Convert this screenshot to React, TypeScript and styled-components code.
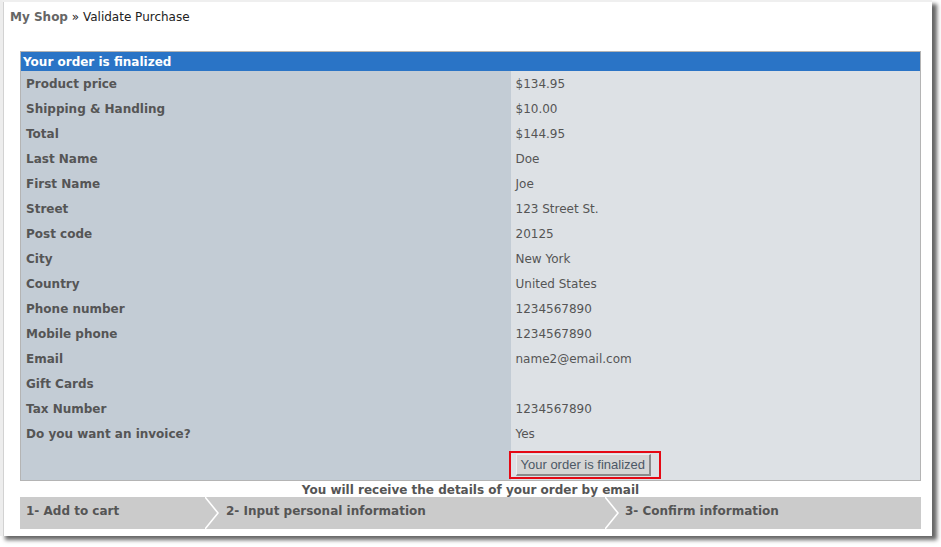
import React from "react";
import styled, { createGlobalStyle } from "styled-components";

const Global = createGlobalStyle`
  html, body { margin: 0; padding: 0; background: #ffffff; }
  body { font-family: "DejaVu Sans", Verdana, sans-serif; font-size: 12px; }
`;

const Page = styled.div`
  width: 941px;
  height: 547px;
  background: #ffffff;
  overflow: hidden;
`;

const Frame = styled.div`
  box-sizing: border-box;
  width: 932px;
  height: 536px;
  background: #ffffff;
  border-top: 2px solid #efefef;
  border-left: 3px solid #ededed;
  box-shadow: inset 1px 0 0 #d2d2d2, 5px 4px 4px rgba(0, 0, 0, 0.6);
  padding: 7px 0 0 7px;
  display: flex;
  flex-direction: column;
`;

const Crumbs = styled.div`
  line-height: 16px;
  color: #222;
  height: 16px;
`;

const CrumbHome = styled.span`
  font-weight: bold;
  color: #666;
`;

const Content = styled.div`
  margin: 26px 0 0 10px;
  width: 901px;
  display: flex;
  flex-direction: column;
`;

const Table = styled.table`
  width: 901px;
  border-collapse: collapse;
  border: 1px solid #b4b4b4;
  color: #555;
`;

const HeadCell = styled.th`
  background: #2a74c6;
  color: #fff;
  font-weight: bold;
  text-align: left;
  height: 19px;
  padding: 1px 0 0 2px;
  line-height: 18px;
  box-sizing: border-box;
`;

const Label = styled.td`
  background: #c3ccd5;
  width: 490px;
  font-weight: bold;
  height: 25px;
  padding: 1px 0 0 5px;
  line-height: 24px;
  white-space: nowrap;
  box-sizing: border-box;
`;

const Value = styled.td`
  background: #dde1e5;
  height: 25px;
  padding: 1px 0 0 5px;
  line-height: 24px;
  box-sizing: border-box;
`;

const ButtonValue = styled(Value)`
  height: 34px;
  padding: 0;
  vertical-align: top;
`;

const Highlight = styled.span`
  display: inline-flex;
  margin-top: 5px;
  margin-left: -2px;
  border: 2px solid #e50914;
  padding: 1px 8px 1px 5px;
`;

const Btn = styled.button`
  font-family: "Liberation Sans", Arial, sans-serif;
  font-size: 13px;
  color: #4c5866;
  background: #d5d5d5;
  border-style: solid;
  border-width: 1px 2px 2px 1px;
  border-color: #eeeeee #8a8a8a #8a8a8a #eeeeee;
  height: 22px;
  padding: 0 4px 0 4px;
  margin: 0;
  line-height: 19px;
`;

const Notice = styled.div`
  text-align: center;
  font-weight: bold;
  color: #555;
  line-height: 14px;
  height: 14px;
  padding-top: 2px;
`;

const Steps = styled.div`
  display: flex;
  height: 32px;
  background: #cbcbcb;
  color: #555;
  font-weight: bold;
`;

const Step = styled.div<{ $w?: number }>`
  display: flex;
  align-items: stretch;
  width: ${(p) => (p.$w ? `${p.$w}px` : "auto")};
  flex: ${(p) => (p.$w ? "none" : "1")};
`;

const StepText = styled.span<{ $pad: number }>`
  padding-left: ${(p) => p.$pad}px;
  line-height: 28px;
`;

const Chevron = () => (
  <svg width="14" height="32" viewBox="0 0 14 32" style={{ display: "block", flex: "none" }}>
    <polyline points="0,0 13,16 0,32" fill="none" stroke="#ffffff" strokeWidth="1.6" />
  </svg>
);

const rows: [string, string][] = [
  ["Product price", "$134.95"],
  ["Shipping & Handling", "$10.00"],
  ["Total", "$144.95"],
  ["Last Name", "Doe"],
  ["First Name", "Joe"],
  ["Street", "123 Street St."],
  ["Post code", "20125"],
  ["City", "New York"],
  ["Country", "United States"],
  ["Phone number", "1234567890"],
  ["Mobile phone", "1234567890"],
  ["Email", "name2@email.com"],
  ["Gift Cards", ""],
  ["Tax Number", "1234567890"],
  ["Do you want an invoice?", "Yes"],
];

export default function App() {
  return (
    <Page>
      <Global />
      <Frame>
        <Crumbs>
          <CrumbHome>My Shop</CrumbHome> » Validate Purchase
        </Crumbs>
        <Content>
          <Table>
            <thead>
              <tr>
                <HeadCell colSpan={2}>Your order is finalized</HeadCell>
              </tr>
            </thead>
            <tbody>
              {rows.map(([l, v]) => (
                <tr key={l}>
                  <Label>{l}</Label>
                  <Value>{v}</Value>
                </tr>
              ))}
              <tr>
                <Label />
                <ButtonValue>
                  <Highlight>
                    <Btn type="button">Your order is finalized</Btn>
                  </Highlight>
                </ButtonValue>
              </tr>
            </tbody>
          </Table>
          <Notice>You will receive the details of your order by email</Notice>
          <Steps>
            <Step $w={185}>
              <StepText $pad={6}>1- Add to cart</StepText>
            </Step>
            <Step $w={400}>
              <Chevron />
              <StepText $pad={7}>2- Input personal information</StepText>
            </Step>
            <Step>
              <Chevron />
              <StepText $pad={6}>3- Confirm information</StepText>
            </Step>
          </Steps>
        </Content>
      </Frame>
    </Page>
  );
}
